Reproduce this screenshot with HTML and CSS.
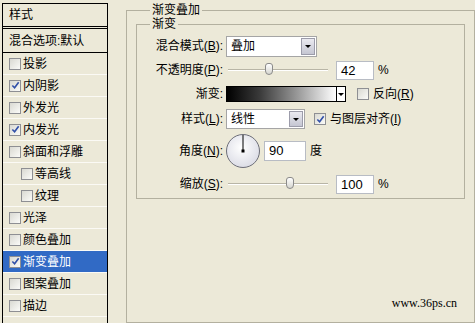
FILE: index.html
```html
<!DOCTYPE html>
<html lang="zh-CN">
  <head>
    <meta charset="UTF-8" />
    <title>图层样式 - 渐变叠加</title>
    <link rel="stylesheet" href="styles.css">
  </head>
  <body>
    <div class="dialog">
      <div class="styles-panel">
        <div class="panel-head">样式</div>
        <div class="panel-blend">混合选项:默认</div>
        <ul class="effect-list">
          <li class="effect"><span class="check"></span>投影</li>
          <li class="effect"><span class="check on"><svg viewBox="0 0 10 10"><polyline points="1.5,5 4,7.5 8.5,1.5" /></svg></span>内阴影</li>
          <li class="effect"><span class="check"></span>外发光</li>
          <li class="effect"><span class="check on"><svg viewBox="0 0 10 10"><polyline points="1.5,5 4,7.5 8.5,1.5" /></svg></span>内发光</li>
          <li class="effect"><span class="check"></span>斜面和浮雕</li>
          <li class="effect sub"><span class="check"></span>等高线</li>
          <li class="effect sub"><span class="check"></span>纹理</li>
          <li class="effect"><span class="check"></span>光泽</li>
          <li class="effect"><span class="check"></span>颜色叠加</li>
          <li class="effect active"><span class="check on"><svg viewBox="0 0 10 10"><polyline points="1.5,5 4,7.5 8.5,1.5" /></svg></span>渐变叠加</li>
          <li class="effect"><span class="check"></span>图案叠加</li>
          <li class="effect"><span class="check"></span>描边</li>
        </ul>
      </div>

      <fieldset class="group outer">
        <legend>渐变叠加</legend>
        <fieldset class="group inner">
          <legend>渐变</legend>
          <div class="form">
            <label class="label">混合模式(<u>B</u>):</label>
            <div class="field">
              <div class="select blend"><span>叠加</span><span class="drop"></span></div>
            </div>

            <label class="label">不透明度(<u>P</u>):</label>
            <div class="field">
              <div class="slider"><span class="thumb opacity"></span></div>
              <div class="input">42</div>
              <span class="unit">%</span>
            </div>

            <label class="label">渐变:</label>
            <div class="field">
              <div class="gradient"><span class="gradient-fill"></span><span class="gradient-arrow"></span></div>
              <span class="check reverse"></span>
              <span class="check-text">反向(<u>R</u>)</span>
            </div>

            <label class="label">样式(<u>L</u>):</label>
            <div class="field">
              <div class="select style"><span>线性</span><span class="drop"></span></div>
              <span class="check on align"><svg viewBox="0 0 10 10"><polyline points="1.5,5 4,7.5 8.5,1.5" /></svg></span>
              <span class="check-text">与图层对齐(<u>I</u>)</span>
            </div>

            <label class="label">角度(<u>N</u>):</label>
            <div class="field">
              <svg class="dial" viewBox="0 0 36 36">
                <defs>
                  <radialGradient id="dialFill" cx="45%" cy="40%" r="60%">
                    <stop offset="0" stop-color="#ffffff" />
                    <stop offset="1" stop-color="#dcdde6" />
                  </radialGradient>
                </defs>
                <circle cx="18" cy="18" r="16.5" fill="url(#dialFill)" stroke="#6d6e78" />
                <line x1="18" y1="18" x2="18" y2="2" stroke="#000" stroke-width="1" />
                <rect x="16.5" y="16.5" width="3" height="3" fill="#000" />
              </svg>
              <div class="input angle">90</div>
              <span class="unit">度</span>
            </div>

            <label class="label">缩放(<u>S</u>):</label>
            <div class="field">
              <div class="slider"><span class="thumb scale"></span></div>
              <div class="input">100</div>
              <span class="unit">%</span>
            </div>
          </div>
        </fieldset>
        <div class="watermark">www.36ps.cn</div>
      </fieldset>
    </div>
  </body>
</html>
```

FILE: styles.css
```css
* {
  margin: 0;
  padding: 0;
  box-sizing: border-box;
}

body {
  font-family: "Liberation Sans", "Noto Sans CJK SC", sans-serif;
  font-size: 12px;
  line-height: 14px;
  background-color: #ece9d8;
  color: #000;
  height: 323px;
  overflow: hidden;
}

.dialog {
  display: flex;
  align-items: flex-start;
  padding: 3px 0 0 2px;
}

/* left list of effects */
.styles-panel {
  width: 106px;
  height: 320px;
  border: 1px solid #000;
  border-bottom: none;
  flex-shrink: 0;
}

.panel-head {
  height: 25px;
  line-height: 22px;
  padding-left: 6px;
  border-bottom: 3px double #000;
}

.panel-blend {
  height: 24px;
  padding: 2px 0 0 6px;
  line-height: 21px;
  border-bottom: 1px solid #000;
}

.effect-list {
  list-style: none;
}

.effect {
  height: 22px;
  display: flex;
  align-items: center;
  gap: 2px;
  padding-left: 6px;
  border-bottom: 1px solid #fbfaf5;
}

.effect.sub {
  padding-left: 18px;
}

.effect.active {
  background-color: #316ac5;
  color: #fff;
}

.check {
  width: 12px;
  height: 12px;
  border: 1px solid #8e8f93;
  background: linear-gradient(135deg, #d9d9d2, #fbfbf8);
  display: inline-flex;
  align-items: center;
  justify-content: center;
  flex-shrink: 0;
}

.check svg {
  width: 9px;
  height: 9px;
  fill: none;
  stroke: #3150a8;
  stroke-width: 1.8;
}

/* group boxes */
.group {
  border: 1px solid #b3b09f;
}

.group legend {
  padding: 0 2px;
  line-height: 14px;
}

.outer {
  width: 350px;
  height: 320px;
  margin-left: 18px;
  padding: 0 9px 0 9px;
}

.outer > legend {
  margin-left: 14px;
}

.inner {
  padding: 3px 0 0 0;
}

.inner > legend {
  margin-left: 13px;
}

.form {
  display: grid;
  grid-template-columns: 86px auto;
  grid-template-rows: 24px 24px 24px 26px 38px 28px;
  column-gap: 3px;
  align-items: center;
}

.label {
  text-align: right;
}

.field {
  display: flex;
  align-items: center;
}

.select {
  height: 21px;
  background-color: #fff;
  border: 1px solid #a5a5a5;
  display: flex;
  align-items: center;
  justify-content: space-between;
  padding: 1px 1px 1px 4px;
}

.select.blend {
  width: 91px;
}

.select.style {
  width: 79px;
  height: 20px;
}

.drop {
  width: 14px;
  height: 100%;
  border: 1px solid #9c9caa;
  background: linear-gradient(#eaeaf0, #c5c6d2);
  display: flex;
  align-items: center;
  justify-content: center;
}

.drop::before,
.gradient-arrow::before {
  content: "";
  border-left: 3px solid transparent;
  border-right: 3px solid transparent;
  border-top: 3px solid #000;
}

.slider {
  position: relative;
  width: 100px;
  height: 2px;
  margin-left: 2px;
  border-top: 1px solid #b8b5a6;
  border-bottom: 1px solid #fff;
}

.thumb {
  position: absolute;
  top: -7px;
  width: 8px;
  height: 12px;
  border: 1px solid #8a8a8a;
  border-radius: 3px 3px 4px 4px;
  background: linear-gradient(#ffffff, #d6d6d0);
}

.thumb.opacity {
  left: 37px;
}

.thumb.scale {
  left: 58px;
}

.input {
  width: 38px;
  height: 19px;
  margin-left: 8px;
  background-color: #fff;
  border: 1px solid #b8bcc4;
  padding: 2px 0 0 4px;
  font-size: 13px;
}

.input.angle {
  width: 42px;
  height: 20px;
  margin-left: 3px;
}

.unit {
  margin-left: 4px;
}

.gradient {
  width: 120px;
  height: 16px;
  border: 1px solid #000;
  display: flex;
}

.gradient-fill {
  flex: 1;
  background: linear-gradient(to right, #000 0%, #3a3a3a 30%, #9a9a9a 65%, #fff 100%);
}

.gradient-arrow {
  width: 9px;
  background-color: #fff;
  border-left: 1px solid #000;
  display: flex;
  align-items: center;
  justify-content: center;
}

.check.reverse {
  margin-left: 11px;
}

.check.align {
  margin-left: 9px;
}

.check-text {
  margin-left: 4px;
}

.dial {
  width: 36px;
  height: 36px;
  margin-left: -1px;
}

.watermark {
  margin-top: 97px;
  padding-right: 8px;
  text-align: right;
  font-family: "Liberation Serif", serif;
  font-size: 12px;
}
```
